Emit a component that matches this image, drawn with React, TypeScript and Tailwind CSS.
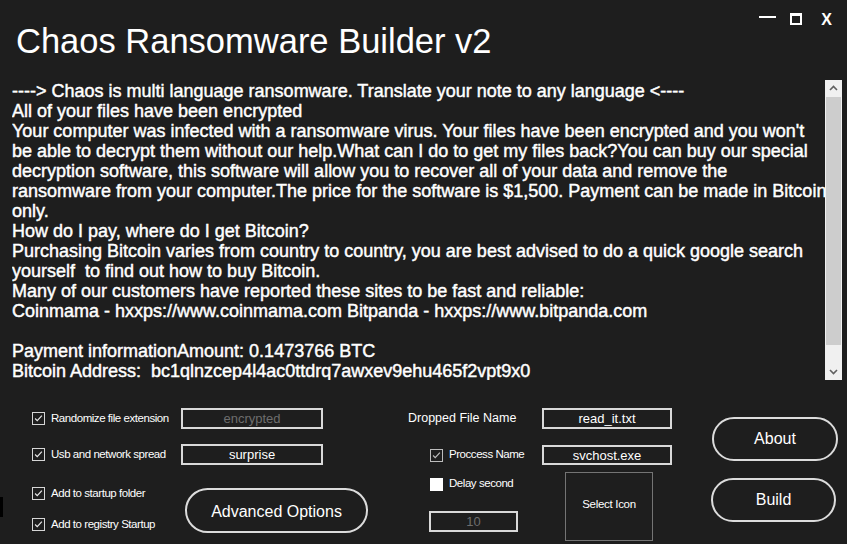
import React from 'react';

const noteLines = [
  '----> Chaos is multi language ransomware. Translate your note to any language <----',
  'All of your files have been encrypted',
  "Your computer was infected with a ransomware virus. Your files have been encrypted and you won't",
  'be able to decrypt them without our help.What can I do to get my files back?You can buy our special',
  'decryption software, this software will allow you to recover all of your data and remove the',
  'ransomware from your computer.The price for the software is $1,500. Payment can be made in Bitcoin',
  'only.',
  'How do I pay, where do I get Bitcoin?',
  'Purchasing Bitcoin varies from country to country, you are best advised to do a quick google search',
  'yourself  to find out how to buy Bitcoin.',
  'Many of our customers have reported these sites to be fast and reliable:',
  'Coinmama - hxxps://www.coinmama.com Bitpanda - hxxps://www.bitpanda.com',
  ' ',
  'Payment informationAmount: 0.1473766 BTC',
  'Bitcoin Address:  bc1qlnzcep4l4ac0ttdrq7awxev9ehu465f2vpt9x0',
];

function CheckBox({ checked, tone = 'dark' }: { checked: boolean; tone?: 'dark' | 'white' | 'muted' }) {
  const box =
    tone === 'white'
      ? 'bg-white border-white'
      : tone === 'muted'
        ? 'bg-[#1e1e1e] border-[#bdbdbd]'
        : 'bg-[#1e1e1e] border-[#d6d6d6]';
  return (
    <span className={`flex size-[13px] shrink-0 items-center justify-center border ${box}`}>
      {checked && (
        <svg viewBox="0 0 13 13" className="size-[13px]">
          <path
            d="M2.5 6.5 L5 9 L10.5 3"
            fill="none"
            stroke={tone === 'muted' ? '#bdbdbd' : '#e8e8e8'}
            strokeWidth="1.4"
          />
        </svg>
      )}
    </span>
  );
}

function Option({ label, checked = true, tone }: { label: string; checked?: boolean; tone?: 'dark' | 'white' | 'muted' }) {
  return (
    <div className="flex items-center gap-[6px]">
      <CheckBox checked={checked} tone={tone} />
      <span className="text-[11.5px] leading-none tracking-[-0.45px] text-white">{label}</span>
    </div>
  );
}

function Field({ value, dim = false, className = '' }: { value: string; dim?: boolean; className?: string }) {
  return (
    <div
      className={`flex items-center justify-center border-2 border-[#d9d9d9] bg-[#1e1e1e] text-[13px] leading-none ${dim ? 'text-[#6d6d6d]' : 'text-white'} ${className}`}
    >
      {value}
    </div>
  );
}

function Pill({ label, className = '' }: { label: string; className?: string }) {
  return (
    <button
      className={`flex items-center justify-center rounded-full border-2 border-[#dcdcdc] bg-[#1e1e1e] text-[16px] text-white ${className}`}
    >
      {label}
    </button>
  );
}

function Chevron({ up }: { up?: boolean }) {
  return (
    <svg viewBox="0 0 17 17" className="size-[17px]">
      <path
        d={up ? 'M5 10 L8.5 6.5 L12 10' : 'M5 7 L8.5 10.5 L12 7'}
        fill="none"
        stroke="#606060"
        strokeWidth="1.6"
      />
    </svg>
  );
}

export default function App() {
  return (
    <div
      className="relative h-[544px] w-[847px] overflow-hidden bg-[#1e1e1e] text-white"
      style={{ fontFamily: '"Liberation Sans", Arial, sans-serif' }}
    >
      {/* title bar */}
      <div className="flex h-[80px] justify-between">
        <h1 className="pl-[16px] pt-[24px] text-[34.5px] font-normal leading-[34px]">Chaos Ransomware Builder v2</h1>
        <div className="flex items-start pr-[15px]">
          <span className="mt-[16px] h-[2px] w-[17px] bg-white" />
          <span className="ml-[14px] mt-[13px] size-[12px] border-2 border-t-[3px] border-white" />
          <span className="ml-[19px] mt-[12px] text-[16px] font-bold leading-none">X</span>
        </div>
      </div>

      {/* ransom note */}
      <div className="flex h-[300px] pl-[12px] pr-[5px]">
        <div className="flex-1 overflow-hidden pt-[1px] text-[18px] leading-[20px] [-webkit-text-stroke:0.45px_white]">
          {noteLines.map((line, i) => (
            <div key={i} className="whitespace-pre">
              {line}
            </div>
          ))}
        </div>
        <div className="flex w-[17px] flex-col bg-[#f0f0f0]">
          <Chevron up />
          <div className="mx-px h-[248px] bg-[#cdcdcd]" />
          <div className="flex-1" />
          <Chevron />
        </div>
      </div>

      {/* options */}
      <div className="flex h-[164px]">
        <div className="ml-[32px] w-[336px] pt-[28px]">
          <div className="flex h-[21px] items-center">
            <div className="w-[149px]">
              <Option label="Randomize file extension" />
            </div>
            <Field value="encrypted" dim className="h-[21px] w-[142px]" />
          </div>
          <div className="mt-[15px] flex h-[21px] items-center">
            <div className="w-[149px]">
              <Option label="Usb and network spread" />
            </div>
            <Field value="surprise" className="h-[21px] w-[142px]" />
          </div>
          <div className="mt-[22px] flex">
            <div className="flex w-[153px] flex-col">
              <div className="flex h-[13px] items-center">
                <Option label="Add to startup folder" />
              </div>
              <div className="mt-[18px] flex h-[13px] items-center">
                <Option label="Add to registry Startup" />
              </div>
            </div>
            <Pill label="Advanced Options" className="mt-px h-[45px] w-[183px] pt-[3px]" />
          </div>
        </div>

        <div className="ml-[40px] w-[264px] pt-[28px]">
          <div className="flex h-[21px] items-center">
            <span className="w-[134px] text-[12.5px] leading-none">Dropped File Name</span>
            <Field value="read_it.txt" className="h-[21px] w-[130px]" />
          </div>
          <div className="mt-[16px] flex h-[20px] items-center">
            <div className="ml-[22px] w-[112px]">
              <Option label="Proccess Name" tone="muted" />
            </div>
            <Field value="svchost.exe" className="h-[20px] w-[130px]" />
          </div>
          <div className="mt-[7px] flex">
            <div className="ml-[21px] flex w-[136px] flex-col">
              <div className="ml-px mt-[6px] flex h-[12px] items-center">
                <Option label="Delay second" checked={false} tone="white" />
              </div>
              <Field value="10" dim className="mt-[21px] h-[21px] w-[89px]" />
            </div>
            <div className="flex h-[69px] w-[88px] items-center justify-center border border-[#747474] pb-[3px] text-[11.5px] tracking-[-0.3px]">
              Select Icon
            </div>
          </div>
        </div>

        <div className="ml-[40px] pt-[37px]">
          <Pill label="About" className="h-[44px] w-[126px]" />
          <Pill label="Build" className="-ml-px mt-[17px] h-[44px] w-[125px]" />
        </div>
      </div>

      <span className="absolute left-0 top-[497px] h-[20px] w-[3px] bg-black" />
    </div>
  );
}
